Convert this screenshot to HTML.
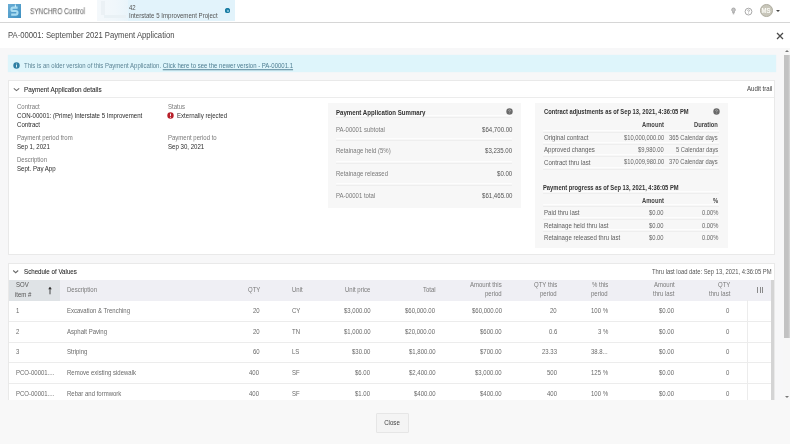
<!DOCTYPE html>
<html><head><meta charset="utf-8">
<style>
*{margin:0;padding:0;box-sizing:border-box}
html,body{width:790px;height:444px;overflow:hidden;background:#fff;font-family:"Liberation Sans",sans-serif;color:#333}
.a{position:absolute}
.t{position:absolute;white-space:nowrap;line-height:1;z-index:2;transform:scaleY(1.12);transform-origin:0 60%;will-change:transform}
.r{text-align:right}
#hdr{left:0;top:0;width:790px;height:23px;background:#fff;border-bottom:1px solid #d6d6d6}
#ttl{left:0;top:23px;width:790px;height:25px;background:#fff}
#main{left:0;top:48px;width:790px;height:352px;background:#f7f7f8}
#foot{left:0;top:400px;width:790px;height:44px;background:#f8f8f8}
.lbl{color:#7a7a7a;font-size:6px}
.val{color:#2b2b2b;font-size:6.1px}
.box{background:#f7f7f7}
.sep{position:absolute;height:1px;background:#eeeeee;box-shadow:0 -2px 1px #fefefe}
.cell{font-size:6px;color:#6a6a6a}
</style></head><body>
<!-- header -->
<div id="hdr" class="a"></div>
<svg class="a" style="left:8px;top:4px" width="13" height="14" viewBox="0 0 13 14"><defs><linearGradient id="lg" x1="0" y1="0" x2="1" y2="1"><stop offset="0" stop-color="#6aaed6"/><stop offset="1" stop-color="#3d8fc0"/></linearGradient></defs><rect x="0" y="0" width="13" height="14" fill="url(#lg)"/><path d="M9.6 3.6H5Q3.4 3.6 3.4 5.2Q3.4 7 5 7H7.8Q9.5 7 9.5 8.8Q9.5 10.6 7.8 10.6H3.2" fill="none" stroke="#a9dcf1" stroke-width="2.1"/><path d="M7.4 0.5V3" stroke="#cdeef9" stroke-width="1.1"/></svg>
<div class="t" style="left:30px;top:7.6px;font-size:7.4px;color:#555;transform:scale(.875,1.15);transform-origin:0 60%">SYNCHRO Control</div>
<div class="a" style="left:97.5px;top:0;width:137px;height:21px;background:#e2f3fb"></div>
<div class="a" style="left:97px;top:0;width:31px;height:21px;background:linear-gradient(90deg,#f4f8fb,#f0f7fb 60%,#e9f4fa)"></div><div class="a" style="left:101px;top:1px;width:4px;height:14px;background:#ebf1f5"></div><div class="a" style="left:104px;top:15px;width:22px;height:3px;background:#e9f1f5"></div>
<div class="t" style="left:129px;top:4.6px;font-size:6px;color:#555">42</div>
<div class="t" style="left:129px;top:13.3px;font-size:6.12px;color:#555">Interstate 5 Improvement Project</div>
<div class="a" style="left:225.2px;top:8.2px;width:5.2px;height:5.2px;border-radius:50%;background:#2a8fb5;box-shadow:inset 0 0 0 1.3px #1a7aa0"></div><div class="a" style="left:226.9px;top:9.9px;width:1.8px;height:1.8px;border-radius:50%;background:#8cc8df"></div>
<!-- right icons -->
<svg class="a" style="left:728px;top:5px" width="12" height="12" viewBox="0 0 12 12"><path d="M5.5 3Q3.7 3 3.7 4.8Q3.7 5.9 4.7 6.7V7.8H6.3V6.7Q7.3 5.9 7.3 4.8Q7.3 3 5.5 3Z" fill="#c4c4c4" stroke="#9c9c9c" stroke-width="0.8"/><path d="M4.8 8.8H6.2" stroke="#9c9c9c" stroke-width="0.9"/></svg>
<svg class="a" style="left:743px;top:5.5px" width="12" height="12" viewBox="0 0 12 12"><circle cx="5.5" cy="5.6" r="3.4" fill="none" stroke="#a0a0a0" stroke-width="0.9"/><path d="M4.5 4.7Q4.6 3.8 5.5 3.8Q6.5 3.8 6.5 4.7Q6.5 5.3 5.5 5.7V6.3" fill="none" stroke="#a0a0a0" stroke-width="0.8"/><circle cx="5.5" cy="7.3" r="0.45" fill="#a0a0a0"/></svg>
<div class="a" style="left:760px;top:4.2px;width:12.8px;height:12.8px;border-radius:50%;background:#c8c6ba;border:1px solid #aeac9f"></div>
<div class="t" style="left:760.4px;top:7.6px;width:12px;text-align:center;font-size:6px;font-weight:bold;color:#fbfbf6">MS</div>
<div class="a" style="left:775.8px;top:9.6px;width:0;height:0;border-left:2px solid transparent;border-right:2px solid transparent;border-top:2.5px solid #444"></div>

<!-- title -->
<div id="ttl" class="a"></div>
<div class="t" style="left:8px;top:31.9px;font-size:7.7px;color:#4a4a4a">PA-00001: September 2021 Payment Application</div>
<svg class="a" style="left:776px;top:31.5px" width="8" height="8" viewBox="0 0 8 8"><path d="M1 1L7 7M7 1L1 7" stroke="#4a4a4a" stroke-width="1.25"/></svg>

<!-- main -->
<div id="main" class="a"></div>
<!-- info banner -->
<div class="a" style="left:8px;top:55px;width:768px;height:17.3px;background:#def5fb;box-shadow:0 0 1.5px #e6f3f8"></div>
<svg class="a" style="left:13.1px;top:61.9px" width="7" height="7" viewBox="0 0 7 7"><circle cx="3.5" cy="3.5" r="3.2" fill="#2e7fa3"/><path d="M3.5 3V5.4" stroke="#e8f6fb" stroke-width="0.9"/><circle cx="3.5" cy="1.9" r="0.5" fill="#e8f6fb"/></svg>
<div class="t" style="left:23.5px;top:62.8px;font-size:6px;color:#5d8596">This is an older version of this Payment Application. <span style="text-decoration:underline;color:#4d7d91">Click here to see the newer version - PA-00001.1</span></div>

<!-- details panel -->
<div class="a" style="left:8px;top:80px;width:767px;height:175px;background:#fff;border:1px solid #e9e9e9"></div>
<div class="sep" style="left:9px;top:97px;width:765px;background:#ececec"></div>
<svg class="a" style="left:12.5px;top:87px" width="7" height="5" viewBox="0 0 7 5"><path d="M0.8 1.3L3.5 3.6L6.2 1.3" fill="none" stroke="#6a6a6a" stroke-width="1.05"/></svg>
<div class="t" style="left:23.5px;top:86.7px;font-size:6.35px;color:#2a2a2a;-webkit-text-stroke:0.07px #2a2a2a">Payment Application details</div>
<div class="t r" style="right:18px;top:86.3px;font-size:6.1px;color:#444">Audit trail</div>

<div class="t lbl" style="left:17px;top:103.7px">Contract</div>
<div class="t val" style="left:17px;top:112.7px">CON-00001: (Prime) Interstate 5 Improvement</div>
<div class="t val" style="left:17px;top:121.7px">Contract</div>
<div class="t lbl" style="left:17px;top:134.7px">Payment period from</div>
<div class="t val" style="left:17px;top:143.7px">Sep 1, 2021</div>
<div class="t lbl" style="left:17px;top:156.7px">Description</div>
<div class="t val" style="left:17px;top:165.7px">Sept. Pay App</div>

<div class="t lbl" style="left:168px;top:103.7px">Status</div>
<svg class="a" style="left:167px;top:112.3px" width="7" height="7" viewBox="0 0 7 7"><circle cx="3.5" cy="3.5" r="3.2" fill="#b8202a"/><path d="M3.5 1.6V4.1" stroke="#fff" stroke-width="0.9"/><circle cx="3.5" cy="5.2" r="0.5" fill="#fff"/></svg>
<div class="t val" style="left:176.7px;top:112.9px;font-size:6.1px;color:#333">Externally rejected</div>
<div class="t lbl" style="left:168px;top:134.7px">Payment period to</div>
<div class="t val" style="left:168px;top:143.7px">Sep 30, 2021</div>

<!-- summary box -->
<div class="a box" style="left:328px;top:103px;width:193px;height:105px"></div>
<div class="t" style="left:336px;top:109.8px;font-size:6.1px;font-weight:bold;color:#333">Payment Application Summary</div>
<svg class="a" style="left:505.8px;top:107.7px" width="7" height="7" viewBox="0 0 7 7"><circle cx="3.5" cy="3.5" r="3.2" fill="#6a6a6a"/><path d="M2.5 2.8Q2.5 1.8 3.5 1.8Q4.5 1.8 4.5 2.7Q4.5 3.3 3.5 3.7V4.2" fill="none" stroke="#b5b5b5" stroke-width="0.7"/><circle cx="3.5" cy="5.2" r="0.4" fill="#b5b5b5"/></svg>
<div class="sep" style="left:336px;top:117px;width:176px"></div>
<div class="t lbl" style="left:336px;top:126.6px">PA-00001 subtotal</div>
<div class="t val r" style="right:278px;top:126.6px;color:#555">$64,700.00</div>
<div class="sep" style="left:336px;top:140px;width:176px"></div>
<div class="t lbl" style="left:336px;top:148.4px">Retainage held (5%)</div>
<div class="t val r" style="right:278px;top:148.4px;color:#555">$3,235.00</div>
<div class="sep" style="left:336px;top:163px;width:176px"></div>
<div class="t lbl" style="left:336px;top:170.5px">Retainage released</div>
<div class="t val r" style="right:278px;top:170.5px;color:#555">$0.00</div>
<div class="sep" style="left:336px;top:185px;width:176px"></div>
<div class="t lbl" style="left:336px;top:192.5px">PA-00001 total</div>
<div class="t val r" style="right:278px;top:192.5px;color:#555">$61,465.00</div>

<!-- contract adjustments box -->
<div class="a box" style="left:534.5px;top:103px;width:193px;height:145px"></div>
<div class="t" style="left:543.5px;top:110px;font-size:5.8px;font-weight:bold;color:#333">Contract adjustments as of Sep 13, 2021, 4:36:05 PM</div>
<svg class="a" style="left:712.7px;top:108.2px" width="7" height="7" viewBox="0 0 7 7"><circle cx="3.5" cy="3.5" r="3.2" fill="#6a6a6a"/><path d="M2.5 2.8Q2.5 1.8 3.5 1.8Q4.5 1.8 4.5 2.7Q4.5 3.3 3.5 3.7V4.2" fill="none" stroke="#b5b5b5" stroke-width="0.7"/><circle cx="3.5" cy="5.2" r="0.4" fill="#b5b5b5"/></svg>
<div class="t r" style="right:126px;top:123px;font-size:5.8px;font-weight:bold;color:#444">Amount</div>
<div class="t r" style="right:72px;top:123px;font-size:5.8px;font-weight:bold;color:#444">Duration</div>
<div class="sep" style="left:543px;top:132px;width:176px"></div>
<div class="t lbl" style="left:543.5px;top:135px;font-size:6.1px;color:#5e5e5e">Original contract</div>
<div class="t lbl r" style="right:126px;top:135.5px;font-size:5.8px;color:#666">$10,000,000.00</div>
<div class="t lbl r" style="right:72px;top:135.5px;font-size:5.8px;color:#666">365 Calendar days</div>
<div class="sep" style="left:543px;top:144px;width:176px"></div>
<div class="t lbl" style="left:543.5px;top:147px;font-size:6.1px;color:#5e5e5e">Approved changes</div>
<div class="t lbl r" style="right:126px;top:147.5px;font-size:5.8px;color:#666">$9,980.00</div>
<div class="t lbl r" style="right:72px;top:147.5px;font-size:5.8px;color:#666">5 Calendar days</div>
<div class="sep" style="left:543px;top:156px;width:176px"></div>
<div class="t lbl" style="left:543.5px;top:159.5px;font-size:6.1px;color:#5e5e5e">Contract thru last</div>
<div class="t lbl r" style="right:126px;top:160px;font-size:5.8px;color:#666">$10,009,980.00</div>
<div class="t lbl r" style="right:72px;top:160px;font-size:5.8px;color:#666">370 Calendar days</div>
<div class="sep" style="left:543px;top:169px;width:176px"></div>

<div class="t" style="left:543px;top:185.5px;font-size:5.8px;font-weight:bold;color:#333">Payment progress as of Sep 13, 2021, 4:36:05 PM</div>
<div class="sep" style="left:543px;top:193px;width:176px"></div>
<div class="t r" style="right:126px;top:198.8px;font-size:5.8px;font-weight:bold;color:#444">Amount</div>
<div class="t r" style="right:72px;top:198.8px;font-size:5.8px;font-weight:bold;color:#444">%</div>
<div class="sep" style="left:543px;top:206px;width:176px"></div>
<div class="t lbl" style="left:543.5px;top:209.5px;font-size:6.1px;color:#5e5e5e">Paid thru last</div>
<div class="t lbl r" style="right:126px;top:210.5px;font-size:5.8px;color:#666">$0.00</div>
<div class="t lbl r" style="right:72px;top:210.5px;font-size:5.8px;color:#666">0.00%</div>
<div class="sep" style="left:543px;top:219px;width:176px"></div>
<div class="t lbl" style="left:543.5px;top:222.7px;font-size:6.1px;color:#5e5e5e">Retainage held thru last</div>
<div class="t lbl r" style="right:126px;top:223.5px;font-size:5.8px;color:#666">$0.00</div>
<div class="t lbl r" style="right:72px;top:223.5px;font-size:5.8px;color:#666">0.00%</div>
<div class="sep" style="left:543px;top:231px;width:176px"></div>
<div class="t lbl" style="left:543.5px;top:235px;font-size:6.1px;color:#5e5e5e">Retainage released thru last</div>
<div class="t lbl r" style="right:126px;top:235.7px;font-size:5.8px;color:#666">$0.00</div>
<div class="t lbl r" style="right:72px;top:235.7px;font-size:5.8px;color:#666">0.00%</div>

<!-- SOV panel -->
<div class="a" style="left:8px;top:263px;width:767px;height:140px;background:#fff;border:1px solid #e9e9e9"></div>
<svg class="a" style="left:12px;top:269px" width="7" height="5" viewBox="0 0 7 5"><path d="M1.2 1.5L3.7 3.7L6.2 1.5" fill="none" stroke="#6a6a6a" stroke-width="1.05"/></svg>
<div class="t" style="left:23.5px;top:268.5px;font-size:6.2px;color:#2a2a2a;-webkit-text-stroke:0.07px #2a2a2a">Schedule of Values</div>
<div class="t r" style="right:18px;top:269.5px;font-size:5.85px;color:#555">Thru last load date: Sep 13, 2021, 4:36:05 PM</div>

<!-- table header -->
<div class="a" style="left:9px;top:279.5px;width:762px;height:21px;background:#efeff4"></div>
<div class="a" style="left:9px;top:279.5px;width:51px;height:21px;background:#dfe3e6"></div>
<div class="t lbl" style="left:15.5px;top:282px;color:#555">SOV</div>
<div class="t lbl" style="left:15.3px;top:291.8px;color:#555">item #</div>
<svg class="a" style="left:47px;top:286px" width="6" height="9" viewBox="0 0 6 9"><path d="M3 8.3V1.5" stroke="#333" stroke-width="0.9"/><path d="M1.2 3.3L3 0.8L4.8 3.3Z" fill="#333"/></svg>
<div class="t lbl" style="left:67px;top:287px;color:#7a7a7a">Description</div>
<div class="t lbl r" style="right:530px;top:287px;color:#7a7a7a">QTY</div>
<div class="t lbl" style="left:291.8px;top:287px;color:#7a7a7a">Unit</div>
<div class="t lbl r" style="right:420px;top:287px;color:#7a7a7a">Unit price</div>
<div class="t lbl r" style="right:354.5px;top:287px;color:#7a7a7a">Total</div>
<div class="t lbl r" style="right:288px;top:282.1px;color:#7a7a7a">Amount this</div>
<div class="t lbl r" style="right:288px;top:291.3px;color:#7a7a7a">period</div>
<div class="t lbl r" style="right:233px;top:282.1px;color:#7a7a7a">QTY this</div>
<div class="t lbl r" style="right:233px;top:291.3px;color:#7a7a7a">period</div>
<div class="t lbl r" style="right:182px;top:282.1px;color:#7a7a7a">% this</div>
<div class="t lbl r" style="right:182px;top:291.3px;color:#7a7a7a">period</div>
<div class="t lbl r" style="right:115.5px;top:282.1px;color:#7a7a7a">Amount</div>
<div class="t lbl r" style="right:115.5px;top:291.3px;color:#7a7a7a">thru last</div>
<div class="t lbl r" style="right:60px;top:282.1px;color:#7a7a7a">QTY</div>
<div class="t lbl r" style="right:60px;top:291.3px;color:#7a7a7a">thru last</div>
<div class="a" style="left:757px;top:287.3px;width:0.9px;height:6px;background:#8a8a8a"></div>
<div class="a" style="left:759.5px;top:287.3px;width:0.9px;height:6px;background:#8a8a8a"></div>
<div class="a" style="left:762px;top:287.3px;width:0.9px;height:6px;background:#8a8a8a"></div>

<!-- table rows -->
<div id="rows">
<div class="t cell" style="left:16px;top:307.77px">1</div>
<div class="t cell" style="left:67px;top:307.77px">Excavation &amp; Trenching</div>
<div class="t cell r" style="right:530.5px;top:307.77px">20</div>
<div class="t cell" style="left:291.8px;top:307.77px">CY</div>
<div class="t cell r" style="right:419.7px;top:307.77px">$3,000.00</div>
<div class="t cell r" style="right:354.5px;top:307.77px">$60,000.00</div>
<div class="t cell r" style="right:288px;top:307.77px">$60,000.00</div>
<div class="t cell r" style="right:233px;top:307.77px">20</div>
<div class="t cell r" style="right:182px;top:307.77px">100 %</div>
<div class="t cell r" style="right:115.5px;top:307.77px">$0.00</div>
<div class="t cell r" style="right:60.5px;top:307.77px">0</div>
<div class="sep" style="left:9px;top:320.95px;width:762px;background:#ececec"></div>
<div class="t cell" style="left:16px;top:328.52px">2</div>
<div class="t cell" style="left:67px;top:328.52px">Asphalt Paving</div>
<div class="t cell r" style="right:530.5px;top:328.52px">20</div>
<div class="t cell" style="left:291.8px;top:328.52px">TN</div>
<div class="t cell r" style="right:419.7px;top:328.52px">$1,000.00</div>
<div class="t cell r" style="right:354.5px;top:328.52px">$20,000.00</div>
<div class="t cell r" style="right:288px;top:328.52px">$600.00</div>
<div class="t cell r" style="right:233px;top:328.52px">0.6</div>
<div class="t cell r" style="right:182px;top:328.52px">3 %</div>
<div class="t cell r" style="right:115.5px;top:328.52px">$0.00</div>
<div class="t cell r" style="right:60.5px;top:328.52px">0</div>
<div class="sep" style="left:9px;top:341.70px;width:762px;background:#ececec"></div>
<div class="t cell" style="left:16px;top:349.27px">3</div>
<div class="t cell" style="left:67px;top:349.27px">Striping</div>
<div class="t cell r" style="right:530.5px;top:349.27px">60</div>
<div class="t cell" style="left:291.8px;top:349.27px">LS</div>
<div class="t cell r" style="right:419.7px;top:349.27px">$30.00</div>
<div class="t cell r" style="right:354.5px;top:349.27px">$1,800.00</div>
<div class="t cell r" style="right:288px;top:349.27px">$700.00</div>
<div class="t cell r" style="right:233px;top:349.27px">23.33</div>
<div class="t cell r" style="right:182px;top:349.27px">38.8...</div>
<div class="t cell r" style="right:115.5px;top:349.27px">$0.00</div>
<div class="t cell r" style="right:60.5px;top:349.27px">0</div>
<div class="sep" style="left:9px;top:362.45px;width:762px;background:#ececec"></div>
<div class="t cell" style="left:16px;top:370.02px">PCO-00001....</div>
<div class="t cell" style="left:67px;top:370.02px">Remove existing sidewalk</div>
<div class="t cell r" style="right:530.5px;top:370.02px">400</div>
<div class="t cell" style="left:291.8px;top:370.02px">SF</div>
<div class="t cell r" style="right:419.7px;top:370.02px">$6.00</div>
<div class="t cell r" style="right:354.5px;top:370.02px">$2,400.00</div>
<div class="t cell r" style="right:288px;top:370.02px">$3,000.00</div>
<div class="t cell r" style="right:233px;top:370.02px">500</div>
<div class="t cell r" style="right:182px;top:370.02px">125 %</div>
<div class="t cell r" style="right:115.5px;top:370.02px">$0.00</div>
<div class="t cell r" style="right:60.5px;top:370.02px">0</div>
<div class="sep" style="left:9px;top:383.20px;width:762px;background:#ececec"></div>
<div class="t cell" style="left:16px;top:390.77px">PCO-00001....</div>
<div class="t cell" style="left:67px;top:390.77px">Rebar and formwork</div>
<div class="t cell r" style="right:530.5px;top:390.77px">400</div>
<div class="t cell" style="left:291.8px;top:390.77px">SF</div>
<div class="t cell r" style="right:419.7px;top:390.77px">$1.00</div>
<div class="t cell r" style="right:354.5px;top:390.77px">$400.00</div>
<div class="t cell r" style="right:288px;top:390.77px">$400.00</div>
<div class="t cell r" style="right:233px;top:390.77px">400</div>
<div class="t cell r" style="right:182px;top:390.77px">100 %</div>
<div class="t cell r" style="right:115.5px;top:390.77px">$0.00</div>
<div class="t cell r" style="right:60.5px;top:390.77px">0</div>
</div><!--/rows-->
<div class="a" style="left:746.5px;top:300px;width:1px;height:100px;background:#ececec"></div>
<div class="a" style="left:771px;top:279.5px;width:3.3px;height:121px;background:#d4d4d4"></div>

<!-- outer scrollbar -->
<div class="a" style="left:783px;top:48px;width:7px;height:352px;background:#f7f7f7"></div>
<div class="a" style="left:784px;top:54.5px;width:6px;height:283.5px;background:linear-gradient(90deg,#c2c2c2 0,#c2c2c2 70%,#dadada 100%)"></div>
<div class="a" style="left:784.8px;top:49.5px;width:0;height:0;border-left:2px solid transparent;border-right:2px solid transparent;border-bottom:2.5px solid #777"></div>
<div class="a" style="left:784.8px;top:396px;width:0;height:0;border-left:2px solid transparent;border-right:2px solid transparent;border-top:2.5px solid #777"></div>

<!-- footer -->
<div id="foot" class="a"></div>
<div class="a" style="left:376px;top:413px;width:32.5px;height:20px;background:#f4f4f4;border:1px solid #e6e6e6;border-radius:1px"></div>
<div class="t" style="left:376px;top:420px;width:32px;text-align:center;font-size:6.1px;color:#444">Close</div>
</body></html>
